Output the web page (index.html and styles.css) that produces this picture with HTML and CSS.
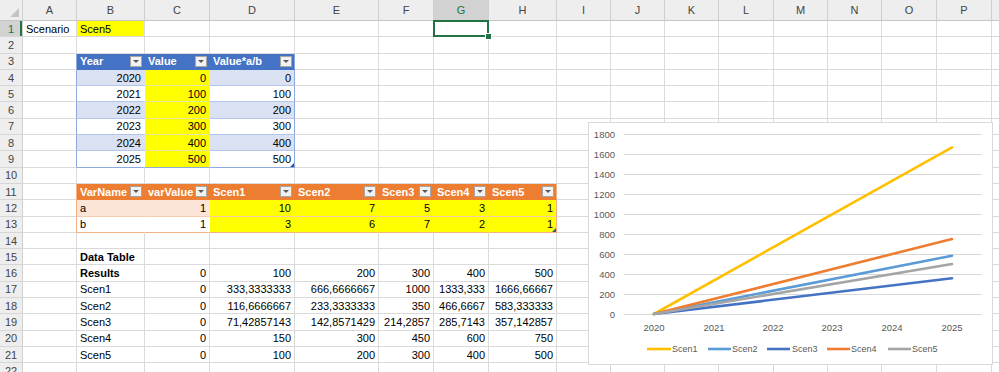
FILE: index.html
```html
<!DOCTYPE html>
<html lang="en">
<head>
    <meta charset="utf-8">
    <title>Scenario sheet</title>
    <link rel="stylesheet" href="styles.css">
</head>
<body>
<div class="sheet">
    <table class="grid">
        <colgroup>
            <col style="width:23px"><col style="width:54px"><col style="width:68px"><col style="width:65px">
            <col style="width:85px"><col style="width:84px"><col style="width:55px"><col style="width:55px">
            <col style="width:68px"><col style="width:54px"><col style="width:54px"><col style="width:54px">
            <col style="width:55px"><col style="width:54px"><col style="width:54px"><col style="width:55px">
            <col style="width:55px"><col style="width:20px">
        </colgroup>
        <thead>
            <tr class="heads">
                <th class="corner"></th><th>A</th><th>B</th><th>C</th><th>D</th><th>E</th><th>F</th><th class="cur">G</th><th>H</th>
                <th>I</th><th>J</th><th>K</th><th>L</th><th>M</th><th>N</th><th>O</th><th>P</th><th></th>
            </tr>
        </thead>
        <tbody>
            <tr>
                <th class="cur">1</th><td>Scenario</td><td class="y">Scen5</td><td></td><td></td><td></td><td></td><td class="sel"></td>
                <td></td><td></td><td></td><td></td><td></td><td></td><td></td><td></td><td></td><td></td>
            </tr>
            <tr>
                <th>2</th><td></td><td></td><td></td><td></td><td></td><td></td><td></td><td></td>
                <td></td><td></td><td></td><td></td><td></td><td></td><td></td><td></td><td></td>
            </tr>
            <tr>
                <th>3</th><td class="lb"></td>
                <td class="bh"><div class="hd">Year<span class="flt"></span></div></td>
                <td class="bh"><div class="hd">Value<span class="flt"></span></div></td>
                <td class="bh rb"><div class="hd">Value*a/b<span class="flt"></span></div></td>
                <td></td><td></td><td></td><td></td><td></td><td></td><td></td><td></td><td></td><td></td><td></td><td></td><td></td>
            </tr>
            <tr>
                <th>4</th><td class="lb"></td><td class="b1 num">2020</td><td class="y bt num">0</td><td class="b1 rb num">0</td>
                <td></td><td></td><td></td><td></td><td></td><td></td><td></td><td></td><td></td><td></td><td></td><td></td><td></td>
            </tr>
            <tr>
                <th>5</th><td class="lb"></td><td class="b0 num">2021</td><td class="y bt num">100</td><td class="b0 rb num">100</td>
                <td></td><td></td><td></td><td></td><td></td><td></td><td></td><td></td><td></td><td></td><td></td><td></td><td></td>
            </tr>
            <tr>
                <th>6</th><td class="lb"></td><td class="b1 num">2022</td><td class="y bt num">200</td><td class="b1 rb num">200</td>
                <td></td><td></td><td></td><td></td><td></td><td></td><td></td><td></td><td></td><td></td><td></td><td></td><td></td>
            </tr>
            <tr>
                <th>7</th><td class="lb"></td><td class="b0 num">2023</td><td class="y bt num">300</td><td class="b0 rb num">300</td>
                <td></td><td></td><td></td><td></td><td></td><td></td><td></td><td></td><td></td><td></td><td></td><td></td><td></td>
            </tr>
            <tr>
                <th>8</th><td class="lb"></td><td class="b1 num">2024</td><td class="y bt num">400</td><td class="b1 rb num">400</td>
                <td></td><td></td><td></td><td></td><td></td><td></td><td></td><td></td><td></td><td></td><td></td><td></td><td></td>
            </tr>
            <tr>
                <th>9</th><td class="lb"></td><td class="b0 num">2025</td><td class="y bt num">500</td><td class="b0 rb num end-blue">500</td>
                <td></td><td></td><td></td><td></td><td></td><td></td><td></td><td></td><td></td><td></td><td></td><td></td><td></td>
            </tr>
            <tr>
                <th>10</th><td></td><td></td><td></td><td></td><td></td><td></td><td></td><td></td>
                <td></td><td></td><td></td><td></td><td></td><td></td><td></td><td></td><td></td>
            </tr>
            <tr>
                <th>11</th><td class="lo"></td>
                <td class="oh"><div class="hd">VarName<span class="flt"></span></div></td>
                <td class="oh"><div class="hd">varValue<span class="flt"></span></div></td>
                <td class="oh"><div class="hd">Scen1<span class="flt"></span></div></td>
                <td class="oh"><div class="hd">Scen2<span class="flt"></span></div></td>
                <td class="oh"><div class="hd">Scen3<span class="flt"></span></div></td>
                <td class="oh"><div class="hd">Scen4<span class="flt"></span></div></td>
                <td class="oh ro"><div class="hd">Scen5<span class="flt"></span></div></td>
                <td></td><td></td><td></td><td></td><td></td><td></td><td></td><td></td><td></td>
            </tr>
            <tr>
                <th>12</th><td class="lo"></td><td class="o1">a</td><td class="o1 num">1</td>
                <td class="y ot num">10</td><td class="y ot num">7</td><td class="y ot num">5</td><td class="y ot num">3</td><td class="y ot ro num">1</td>
                <td></td><td></td><td></td><td></td><td></td><td></td><td></td><td></td><td></td>
            </tr>
            <tr>
                <th>13</th><td class="lo"></td><td class="o0">b</td><td class="o0 num">1</td>
                <td class="y ot num">3</td><td class="y ot num">6</td><td class="y ot num">7</td><td class="y ot num">2</td><td class="y ot ro num end-orange">1</td>
                <td></td><td></td><td></td><td></td><td></td><td></td><td></td><td></td><td></td>
            </tr>
            <tr>
                <th>14</th><td></td><td></td><td></td><td></td><td></td><td></td><td></td><td></td>
                <td></td><td></td><td></td><td></td><td></td><td></td><td></td><td></td><td></td>
            </tr>
            <tr>
                <th>15</th><td></td><td class="bold">Data Table</td><td></td><td></td><td></td><td></td><td></td><td></td>
                <td></td><td></td><td></td><td></td><td></td><td></td><td></td><td></td><td></td>
            </tr>
            <tr>
                <th>16</th><td></td><td class="bold">Results</td><td class="num">0</td><td class="num">100</td><td class="num">200</td><td class="num">300</td><td class="num">400</td><td class="num">500</td>
                <td></td><td></td><td></td><td></td><td></td><td></td><td></td><td></td><td></td>
            </tr>
            <tr>
                <th>17</th><td></td><td>Scen1</td><td class="num">0</td><td class="num">333,3333333</td><td class="num">666,6666667</td><td class="num">1000</td><td class="num">1333,333</td><td class="num">1666,66667</td>
                <td></td><td></td><td></td><td></td><td></td><td></td><td></td><td></td><td></td>
            </tr>
            <tr>
                <th>18</th><td></td><td>Scen2</td><td class="num">0</td><td class="num">116,6666667</td><td class="num">233,3333333</td><td class="num">350</td><td class="num">466,6667</td><td class="num">583,333333</td>
                <td></td><td></td><td></td><td></td><td></td><td></td><td></td><td></td><td></td>
            </tr>
            <tr>
                <th>19</th><td></td><td>Scen3</td><td class="num">0</td><td class="num">71,42857143</td><td class="num">142,8571429</td><td class="num">214,2857</td><td class="num">285,7143</td><td class="num">357,142857</td>
                <td></td><td></td><td></td><td></td><td></td><td></td><td></td><td></td><td></td>
            </tr>
            <tr>
                <th>20</th><td></td><td>Scen4</td><td class="num">0</td><td class="num">150</td><td class="num">300</td><td class="num">450</td><td class="num">600</td><td class="num">750</td>
                <td></td><td></td><td></td><td></td><td></td><td></td><td></td><td></td><td></td>
            </tr>
            <tr>
                <th>21</th><td></td><td>Scen5</td><td class="num">0</td><td class="num">100</td><td class="num">200</td><td class="num">300</td><td class="num">400</td><td class="num">500</td>
                <td></td><td></td><td></td><td></td><td></td><td></td><td></td><td></td><td></td>
            </tr>
            <tr>
                <th>22</th><td></td><td></td><td></td><td></td><td></td><td></td><td></td><td></td>
                <td></td><td></td><td></td><td></td><td></td><td></td><td></td><td></td><td></td>
            </tr>
        </tbody>
    </table>

    <!-- line chart floating over the sheet -->
    <svg class="chart" width="405" height="243" viewBox="0 0 405 243">
        <rect x="0.5" y="0.5" width="404" height="242" fill="#fff" stroke="#d9d9d9"/>
        <g stroke="#d9d9d9" stroke-width="1">
            <line x1="36" y1="12.5" x2="394" y2="12.5"/>
            <line x1="36" y1="32.5" x2="394" y2="32.5"/>
            <line x1="36" y1="52.5" x2="394" y2="52.5"/>
            <line x1="36" y1="72.5" x2="394" y2="72.5"/>
            <line x1="36" y1="92.5" x2="394" y2="92.5"/>
            <line x1="36" y1="112.5" x2="394" y2="112.5"/>
            <line x1="36" y1="132.5" x2="394" y2="132.5"/>
            <line x1="36" y1="152.5" x2="394" y2="152.5"/>
            <line x1="36" y1="172.5" x2="394" y2="172.5"/>
            <line x1="36" y1="192.5" x2="394" y2="192.5"/>
        </g>
        <g class="axis" text-anchor="end">
            <text x="27" y="15.5">1800</text>
            <text x="27" y="35.5">1600</text>
            <text x="27" y="55.5">1400</text>
            <text x="27" y="75.5">1200</text>
            <text x="27" y="95.5">1000</text>
            <text x="27" y="115.5">800</text>
            <text x="27" y="135.5">600</text>
            <text x="27" y="155.5">400</text>
            <text x="27" y="175.5">200</text>
            <text x="27" y="195.5">0</text>
        </g>
        <g class="axis" text-anchor="middle">
            <text x="66" y="208.5">2020</text>
            <text x="126" y="208.5">2021</text>
            <text x="185" y="208.5">2022</text>
            <text x="244" y="208.5">2023</text>
            <text x="304" y="208.5">2024</text>
            <text x="364" y="208.5">2025</text>
        </g>
        <g fill="none" stroke-width="2.6" stroke-linecap="round">
            <line x1="66" y1="192" x2="364" y2="25.3" stroke="#ffc000"/>
            <line x1="66" y1="192" x2="364" y2="133.7" stroke="#5b9bd5"/>
            <line x1="66" y1="192" x2="364" y2="156.3" stroke="#4472c4"/>
            <line x1="66" y1="192" x2="364" y2="117" stroke="#ed7d31"/>
            <line x1="66" y1="192" x2="364" y2="142" stroke="#a5a5a5"/>
        </g>
        <g stroke-width="2.6">
            <line x1="59" y1="227" x2="83" y2="227" stroke="#ffc000"/>
            <line x1="120" y1="227" x2="143" y2="227" stroke="#5b9bd5"/>
            <line x1="179" y1="227" x2="202" y2="227" stroke="#4472c4"/>
            <line x1="239" y1="227" x2="262" y2="227" stroke="#ed7d31"/>
            <line x1="300" y1="227" x2="323" y2="227" stroke="#a5a5a5"/>
        </g>
        <g class="legend">
            <text x="84" y="230">Scen1</text>
            <text x="144" y="230">Scen2</text>
            <text x="204" y="230">Scen3</text>
            <text x="263" y="230">Scen4</text>
            <text x="324" y="230">Scen5</text>
        </g>
    </svg>
</div>
</body>
</html>
```

FILE: styles.css
```css
body {
    margin: 0;
    overflow: hidden;
    background: #fff;
    font-family: "Liberation Sans", Arial, sans-serif;
}
.sheet {
    position: relative;
    width: 999px;
    height: 372px;
    overflow: hidden;
}
.grid {
    border-collapse: separate;
    border-spacing: 0;
    table-layout: fixed;
    width: 1012px;
    font-size: 11px;
    color: #000;
}
.grid tr {
    height: 16.3px;
}
.grid .heads {
    height: 21px;
}
.grid th,
.grid td {
    border-right: 1px solid #dadada;
    border-bottom: 1px solid #dadada;
    padding: 0 3px;
    white-space: nowrap;
    overflow: hidden;
    line-height: 14px;
    box-sizing: border-box;
    text-align: left;
}
.grid th {
    background: #eeeeee;
    color: #444;
    font-weight: normal;
    text-align: center;
    padding: 0;
    border-right-color: #d0d0d0;
    border-bottom-color: #d6d6d6;
}
.grid .heads th {
    border-bottom-color: #c6c6c6;
    vertical-align: middle;
}
.grid th.cur {
    background: #d2d2d2;
    color: #217346;
}
.grid tbody th.cur {
    box-shadow: inset -2px 0 #217346;
}
.corner {
    position: relative;
}
.corner::after {
    content: '';
    position: absolute;
    right: 3px;
    bottom: 3px;
    border-left: 9px solid transparent;
    border-bottom: 9px solid #c4c4c4;
}
.num {
    text-align: right !important;
}
.bold {
    font-weight: bold;
}
.y {
    background: #ffff00;
}

/* selected cell G1 */
.grid td.sel {
    position: relative;
    overflow: visible;
}
.sel::before {
    content: '';
    position: absolute;
    top: -1px;
    left: -1px;
    right: -1px;
    bottom: -1px;
    border: 2px solid #217346;
}
.sel::after {
    content: '';
    position: absolute;
    right: -4px;
    bottom: -4px;
    width: 5px;
    height: 5px;
    background: #217346;
    border: 1px solid #fff;
}

/* blue table */
.grid td.bh {
    background: #4472c4;
    color: #fff;
    font-weight: bold;
    border-right-color: #4472c4;
    border-bottom-color: #4472c4;
    padding: 0 2px 0 3px;
}
.grid td.b1 {
    background: #d9e1f2;
    border-right-color: #d9e1f2;
    border-bottom-color: #b4c6e7;
}
.grid td.b0 {
    background: #fff;
    border-right-color: #fff;
    border-bottom-color: #b4c6e7;
}
.grid td.bt {
    border-right-color: #ffff00;
    border-bottom-color: #e3e6a0;
}
.grid td.lb {
    border-right-color: #8ea9db;
}
.grid td.rb {
    border-right-color: #8ea9db;
}
.grid tr:nth-child(9) td.b0,
.grid tr:nth-child(9) td.bt {
    border-bottom-color: #8ea9db;
}

/* orange table */
.grid td.oh {
    background: #ed7d31;
    color: #fff;
    font-weight: bold;
    border-right-color: #ed7d31;
    border-bottom-color: #ed7d31;
    padding: 0 2px 0 3px;
}
.grid td.o1 {
    background: #fce4d6;
    border-right-color: #fce4d6;
    border-bottom-color: #f8cbad;
}
.grid td.o0 {
    background: #fff;
    border-right-color: #fff;
    border-bottom-color: #f4b084;
}
.grid td.ot {
    border-right-color: #ffff00;
    border-bottom-color: #f8cbad;
}
.grid tr:nth-child(13) td.ot {
    border-bottom-color: #f4b084;
}
.grid td.lo,
.grid td.ro {
    border-right-color: #f4b084;
}

.hd {
    display: flex;
    align-items: center;
    justify-content: space-between;
}
.flt {
    width: 12px;
    height: 11px;
    box-sizing: border-box;
    border: 1px solid #a6a6a6;
    background: #f2f2f2;
    display: flex;
    align-items: center;
    justify-content: center;
    flex-shrink: 0;
}
.flt::after {
    content: '';
    border-left: 3px solid transparent;
    border-right: 3px solid transparent;
    border-top: 3px solid #595959;
}

/* table resize handles */
.grid td.end-blue,
.grid td.end-orange {
    position: relative;
    overflow: visible;
}
.end-blue::after,
.end-orange::after {
    content: '';
    position: absolute;
    right: 0;
    bottom: 0;
    border-left: 4px solid transparent;
    border-bottom: 4px solid #2f5597;
}

.chart {
    position: absolute;
    left: 588px;
    top: 122px;
}
.axis,
.legend {
    font-family: "Liberation Sans", Arial, sans-serif;
    font-size: 9.5px;
    fill: #595959;
}
.legend {
    font-size: 9px;
}
```
